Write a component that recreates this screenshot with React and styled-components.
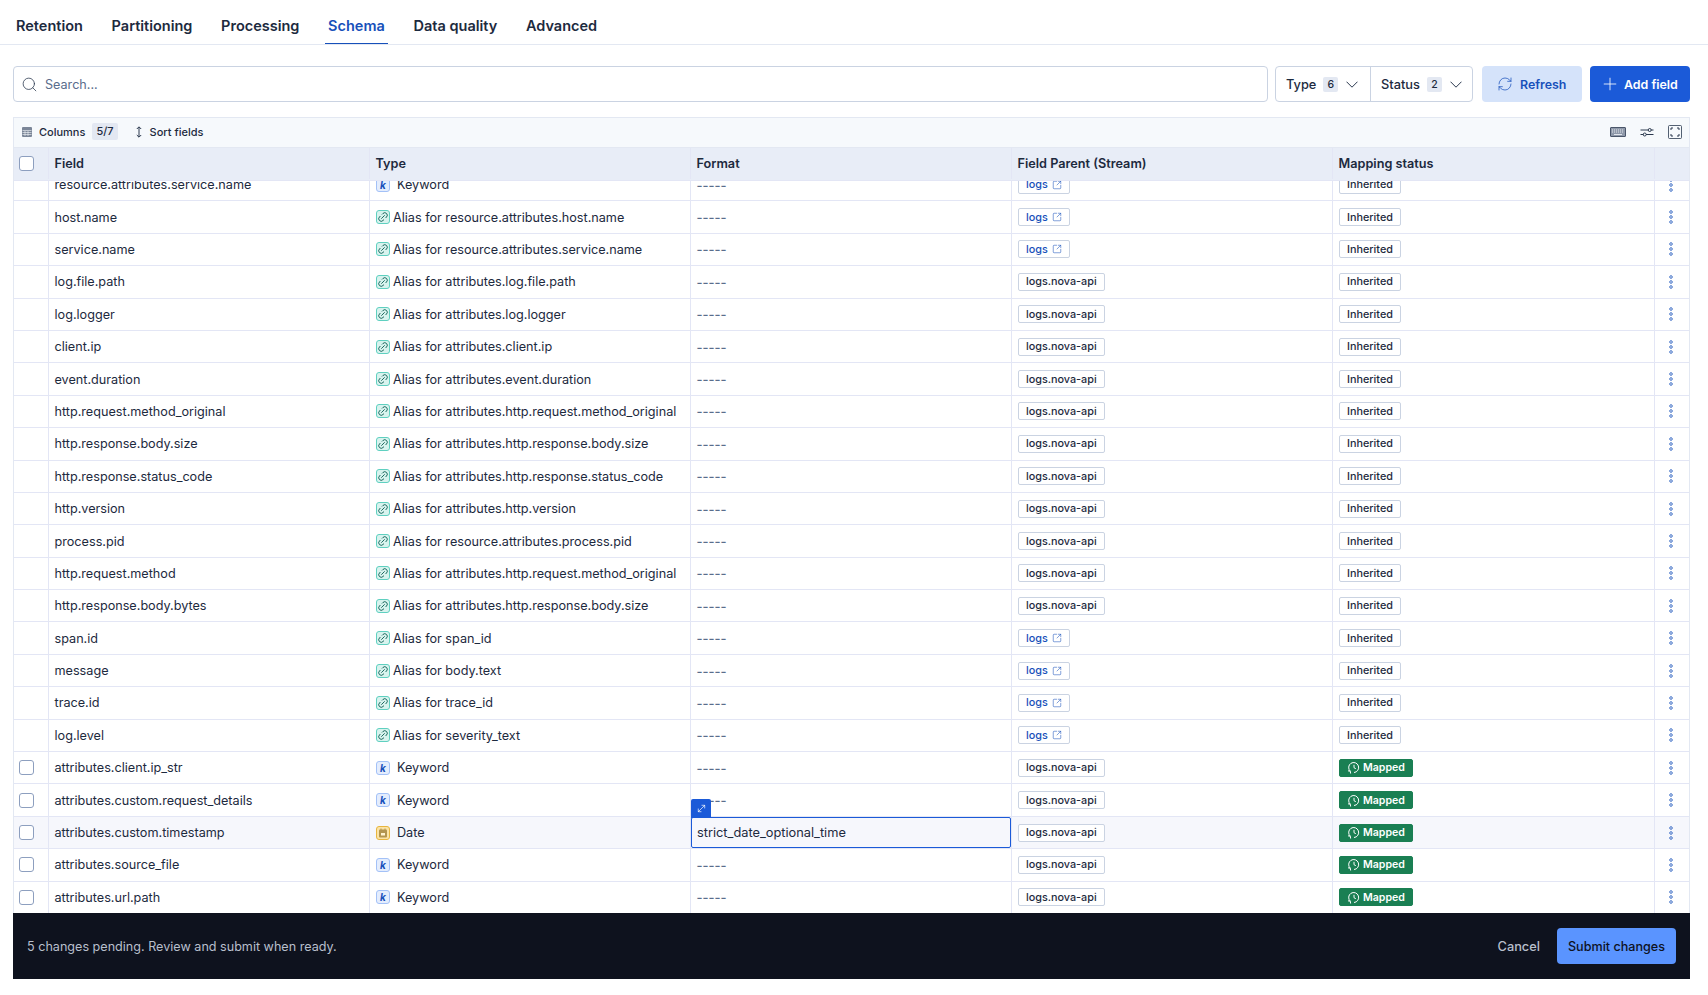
import React from 'react';
import styled, { createGlobalStyle } from 'styled-components';
import { Search, Plus, RefreshCw, Link2, SquareArrowOutUpRight, MoveDiagonal } from 'lucide-react';

const GlobalStyle = createGlobalStyle`
  html, body {
    margin: 0;
    height: 100%;
    background: #fff;
    overflow: hidden;
  }
  body {
    font-family: Inter, "Noto Sans", sans-serif;
    color: #1d2a3e;
  }
`;

const TABS = ['Retention', 'Partitioning', 'Processing', 'Schema', 'Data quality', 'Advanced'];

const COLUMNS = ['Field', 'Type', 'Format', 'Field Parent (Stream)', 'Mapping status'];

const alias = (field, target, parent) => ({ field, kind: 'alias', type: `Alias for ${target}`, parent, status: 'Inherited' });
const mapped = (field, kind, type, extra = {}) => ({ field, kind, type, parent: 'logs.nova-api', status: 'Mapped', check: true, ...extra });

const NOVA = 'logs.nova-api';

const ROWS = [
  { field: 'resource.attributes.service.name', kind: 'keyword', type: 'Keyword', parent: 'logs', status: 'Inherited' },
  alias('host.name', 'resource.attributes.host.name', 'logs'),
  alias('service.name', 'resource.attributes.service.name', 'logs'),
  alias('log.file.path', 'attributes.log.file.path', NOVA),
  alias('log.logger', 'attributes.log.logger', NOVA),
  alias('client.ip', 'attributes.client.ip', NOVA),
  alias('event.duration', 'attributes.event.duration', NOVA),
  alias('http.request.method_original', 'attributes.http.request.method_original', NOVA),
  alias('http.response.body.size', 'attributes.http.response.body.size', NOVA),
  alias('http.response.status_code', 'attributes.http.response.status_code', NOVA),
  alias('http.version', 'attributes.http.version', NOVA),
  alias('process.pid', 'resource.attributes.process.pid', NOVA),
  alias('http.request.method', 'attributes.http.request.method_original', NOVA),
  alias('http.response.body.bytes', 'attributes.http.response.body.size', NOVA),
  alias('span.id', 'span_id', 'logs'),
  alias('message', 'body.text', 'logs'),
  alias('trace.id', 'trace_id', 'logs'),
  alias('log.level', 'severity_text', 'logs'),
  mapped('attributes.client.ip_str', 'keyword', 'Keyword'),
  mapped('attributes.custom.request_details', 'keyword', 'Keyword'),
  mapped('attributes.custom.timestamp', 'date', 'Date', { format: 'strict_date_optional_time', editing: true }),
  mapped('attributes.source_file', 'keyword', 'Keyword'),
  mapped('attributes.url.path', 'keyword', 'Keyword'),
];

const Page = styled.div`
  width: 1708px;
  height: 995px;
  overflow: hidden;
  display: flex;
  flex-direction: column;
`;

const TabBar = styled.nav`
  height: 44px;
  border-bottom: 1px solid #e3e8f2;
  padding-left: 13px;
  display: flex;
  gap: 22.7px;
  flex-shrink: 0;
`;

const Tab = styled.div`
  padding: 6px 3px 0;
  display: flex;
  align-items: center;
  font-size: 14.5px;
  font-weight: 600;
  color: ${p => (p.$active ? '#1750ba' : '#1d2a3e')};
  box-shadow: ${p => (p.$active ? 'inset 0 -1px 0 #1750ba' : 'none')};
`;

const Content = styled.div`
  padding: 21px 18px 0 13px;
  display: flex;
  flex-direction: column;
`;

const Controls = styled.div`
  display: flex;
  height: 36px;
  align-items: stretch;
`;

const SearchBox = styled.div`
  width: 1255px;
  border: 1px solid #cad3e2;
  border-radius: 4px;
  display: flex;
  align-items: center;
  gap: 7px;
  padding-left: 7px;
  font-size: 12.6px;
  color: #5a6d8c;
  margin-right: 7px;
  box-sizing: border-box;
  svg { color: #2b394f; }
`;

const FilterGroup = styled.div`
  width: 198px;
  border: 1px solid #cad3e2;
  border-radius: 4px;
  display: flex;
  box-sizing: border-box;
  margin-right: 9px;
`;

const Filter = styled.div`
  display: flex;
  align-items: center;
  padding-left: 10px;
  font-size: 12.8px;
  font-weight: 500;
  width: ${p => p.$width}px;
  box-sizing: border-box;
  & + & { border-left: 1px solid #cad3e2; }
`;

const FilterCount = styled.span`
  background: #e3e8f2;
  border-radius: 2px;
  font-size: 10.5px;
  font-weight: 500;
  width: 15px;
  height: 15px;
  display: inline-flex;
  align-items: center;
  justify-content: center;
  margin: 0 8px 0 7px;
`;

const Button = styled.div`
  display: flex;
  align-items: center;
  gap: ${p => p.$gap}px;
  padding-left: ${p => p.$pad}px;
  box-sizing: border-box;
  width: 100px;
  border-radius: 4px;
  font-size: 12.4px;
  font-weight: 600;
  background: ${p => (p.$fill ? '#1b5ad8' : '#d5e3fa')};
  color: ${p => (p.$fill ? '#fff' : '#1750ba')};
`;

const RefreshButton = styled(Button)`
  margin-right: 8px;
`;

const Panel = styled.div`
  margin-top: 15px;
  border: 1px solid #e3e8f2;
  border-bottom: none;
  display: flex;
  flex-direction: column;
`;

const Toolbar = styled.div`
  height: 30px;
  box-sizing: border-box;
  background: #f6f9fc;
  border-bottom: 1px solid #e3e8f2;
  display: flex;
  align-items: center;
  font-size: 11px;
  font-weight: 500;
  padding: 0 7px 2px;
`;

const ToolbarItem = styled.div`
  display: flex;
  align-items: center;
  gap: 6px;
  margin-right: 16px;
`;

const ToolCount = styled.span`
  background: #e3e8f2;
  border-radius: 2px;
  padding: 0 4px;
  height: 17px;
  line-height: 17px;
  margin-left: 1px;
`;

const ToolIcons = styled.div`
  margin-left: auto;
  display: flex;
  align-items: center;
  gap: 14px;
`;

const RowGrid = styled.div`
  display: grid;
  grid-template-columns: 35px 321px 321px 321px 321px 322px 34px;
  flex-shrink: 0;
  box-sizing: border-box;
`;

const HeaderRow = styled(RowGrid)`
  height: 33px;
  padding-bottom: 1px;
  background: #e8edf7;
  border-bottom: 1px solid #e3e6f5;
  font-size: 12.7px;
  font-weight: 600;
`;

const Row = styled(RowGrid)`
  height: 32.4px;
  border-bottom: 1px solid #e3e6f5;
  background: ${p => (p.$active ? '#f6f7fc' : '#fff')};
  font-size: 12.65px;
`;

const Cell = styled.div`
  position: relative;
  display: flex;
  align-items: center;
  gap: ${p => p.$gap || 0}px;
  padding-left: ${p => (p.$pad === undefined ? 5.5 : p.$pad)}px;
  border-right: 1px solid #e3e6f5;
  min-width: 0;
  white-space: nowrap;
  &:last-child { border-right: none; }
`;

const CheckCell = styled(Cell)`
  padding-left: 5px;
`;

const Checkbox = styled.span`
  width: 15px;
  height: 15px;
  box-sizing: border-box;
  border: 1px solid #8d9fbf;
  border-radius: 3px;
  background: #fff;
`;

const Body = styled.div`
  height: 733px;
  overflow: hidden;
  display: flex;
  flex-direction: column;
  justify-content: flex-end;
`;

const TOKEN = {
  keyword: { bg: '#e4edfd', border: '#a3c1f7', color: '#1750ba' },
  alias: { bg: '#d8f3ee', border: '#5fd0c0', color: '#0a5a50' },
  date: { bg: '#fbe3a6', border: '#e8b53e', color: '#8a6a1e' },
};

const Token = styled.span`
  width: 14px;
  height: 14px;
  box-sizing: border-box;
  border-radius: 3px;
  border: 1px solid ${p => TOKEN[p.$kind].border};
  background: ${p => TOKEN[p.$kind].bg};
  color: ${p => TOKEN[p.$kind].color};
  display: inline-flex;
  align-items: center;
  justify-content: center;
  flex-shrink: 0;
  font-size: 10px;
  font-style: italic;
  font-weight: 700;
  line-height: 1;
`;

const Dashes = styled.span`
  color: #5a6d8c;
  font-size: 13px;
  font-weight: 500;
`;

const Badge = styled.span`
  height: 18px;
  box-sizing: border-box;
  display: inline-flex;
  align-items: center;
  gap: 4px;
  padding: 0 7px;
  border: 1px solid #cad3e2;
  border-radius: 2px;
  font-size: 10.8px;
  font-weight: 500;
  background: #fff;
`;

const LogsBadge = styled(Badge)`
  color: #1750ba;
`;

const MappedBadge = styled(Badge)`
  background: #1a7f53;
  border-color: #1a7f53;
  color: #fff;
  font-weight: 600;
  font-size: 10.6px;
  gap: 3px;
`;

const EditCell = styled.div`
  position: absolute;
  left: 0;
  top: 0;
  right: 0;
  bottom: 0;
  box-sizing: border-box;
  border: 1px solid #1b5ad8;
  border-radius: 2px;
  display: flex;
  align-items: center;
  padding-left: 5px;
  font-size: 12.8px;
`;

const ExpandButton = styled.div`
  position: absolute;
  left: -1px;
  top: -19px;
  width: 20px;
  height: 19px;
  background: #1b5ad8;
  color: #fff;
  border-radius: 2px 2px 0 0;
  display: flex;
  align-items: center;
  justify-content: center;
`;

const Kebab = styled.svg`
  margin-left: 13px;
  display: block;
`;

const ActionBar = styled.div`
  height: 66px;
  margin: -1px -1px 0;
  background: #0e121e;
  display: flex;
  align-items: center;
  padding: 0 14px;
  font-size: 12.6px;
  color: #b8bfcc;
`;

const Cancel = styled.span`
  margin-left: auto;
  font-weight: 500;
  font-size: 12.8px;
  margin-right: 17px;
`;

const Submit = styled.span`
  width: 119px;
  height: 36px;
  background: #5a94ff;
  color: #0e121e;
  border-radius: 4px;
  font-weight: 500;
  display: flex;
  align-items: center;
  justify-content: center;
`;

const TableIcon = () => (
  <svg width="12" height="12" viewBox="0 0 12 12">
    <rect x="1" y="1" width="10" height="10" rx="1" fill="#7b8698" />
    <path d="M1.500 4.500h9M1.500 6.500h9M1.500 8.500h9M4 5v5M7 5v5" stroke="#f6f9fc" strokeWidth="0.6" />
  </svg>
);

const SortIcon = () => (
  <svg width="10" height="14" viewBox="0 0 10 14" fill="none" stroke="#2b394f" strokeWidth="1">
    <path d="M5 2v10M2.800 4 5 1.800 7.200 4M2.800 10 5 12.200 7.200 10" />
  </svg>
);

const ChevronIcon = () => (
  <svg width="12" height="7" viewBox="0 0 12 7" fill="none" stroke="#2b394f" strokeWidth="1">
    <path d="M0.500 0.700 6 6.200 11.500 0.700" />
  </svg>
);

const KeyboardIcon = () => (
  <svg width="16" height="12" viewBox="0 0 16 12" fill="none">
    <rect x="0.500" y="1.500" width="15" height="9" rx="0.500" fill="#8f99aa" stroke="#4a566a" />
    <path d="M2 4h12M2 6h12" stroke="#f6f9fc" strokeWidth="0.8" strokeDasharray="1 1" />
    <path d="M4 8.500h8" stroke="#f6f9fc" strokeWidth="0.8" />
  </svg>
);

const SlidersIcon = () => (
  <svg width="14" height="12" viewBox="0 0 14 12" fill="none" stroke="#2b394f">
    <path d="M0.500 4h8M11 4h2.500M0.500 8.500h3M6 8.500h7.500" />
    <circle cx="9.700" cy="4" r="1.500" />
    <circle cx="4.700" cy="8.500" r="1.500" />
  </svg>
);

const FullscreenIcon = () => (
  <svg width="14" height="14" viewBox="0 0 14 14" fill="none" stroke="#2b394f">
    <rect x="0.500" y="0.500" width="13" height="13" rx="1" strokeOpacity="0.8" />
    <path d="M3 5V3h2M9 3h2v2M11 9v2H9M5 11H3V9" />
  </svg>
);

const CalendarIcon = () => (
  <svg width="10" height="10" viewBox="0 0 10 10">
    <rect x="1" y="1.500" width="8" height="8" rx="1" fill="#b39550" />
    <rect x="2.500" y="0.500" width="1" height="2" fill="#b39550" />
    <rect x="6.500" y="0.500" width="1" height="2" fill="#b39550" />
    <rect x="3" y="5" width="4" height="2.500" fill="#fff3d0" />
  </svg>
);

const ClockBackIcon = () => (
  <svg width="13" height="13" viewBox="0 0 13 13" fill="none" stroke="#fff" strokeWidth="1">
    <path d="M3.300 10.200A5 5 0 1 1 7 11.500" />
    <path d="M1 9.800l2.300 0.400 0.300 2.300" />
    <path d="M7 3.800v2.900l1.800 1" />
  </svg>
);

const KebabIcon = () => (
  <Kebab width="6" height="14" viewBox="0 0 6 14" fill="none" stroke="#1750ba" strokeWidth="0.8">
    <circle cx="3" cy="2" r="1.300" />
    <circle cx="3" cy="7" r="1.300" />
    <circle cx="3" cy="12" r="1.300" />
  </Kebab>
);

const TypeToken = ({ kind }) => (
  <Token $kind={kind}>
    {kind === 'keyword' && 'k'}
    {kind === 'alias' && <Link2 size={12} strokeWidth={1.7} style={{ transform: 'rotate(-45deg)' }} />}
    {kind === 'date' && <CalendarIcon />}
  </Token>
);

const SchemaRow = ({ row }) => (
  <Row $active={row.editing}>
    <CheckCell $pad={5}>{row.check && <Checkbox />}</CheckCell>
    <Cell>{row.field}</Cell>
    <Cell $pad={6} $gap={row.kind === 'alias' ? 3 : 7}>
      <TypeToken kind={row.kind} />
      {row.type}
    </Cell>
    <Cell>
      {row.editing ? (
        <EditCell>
          <ExpandButton><MoveDiagonal size={11} strokeWidth={1.5} /></ExpandButton>
          {row.format}
        </EditCell>
      ) : (
        <Dashes>-----</Dashes>
      )}
    </Cell>
    <Cell $pad={6}>
      {row.parent === 'logs' ? (
        <LogsBadge>logs <SquareArrowOutUpRight size={10} strokeWidth={1.3} /></LogsBadge>
      ) : (
        <Badge>{row.parent}</Badge>
      )}
    </Cell>
    <Cell $pad={6}>
      {row.status === 'Mapped' ? (
        <MappedBadge><ClockBackIcon />Mapped</MappedBadge>
      ) : (
        <Badge>{row.status}</Badge>
      )}
    </Cell>
    <Cell $pad={0}><KebabIcon /></Cell>
  </Row>
);

const App = () => (
  <Page>
    <GlobalStyle />
    <TabBar>
      {TABS.map(tab => <Tab key={tab} $active={tab === 'Schema'}>{tab}</Tab>)}
    </TabBar>
    <Content>
      <Controls>
        <SearchBox><Search size={17} strokeWidth={1.1} />Search...</SearchBox>
        <FilterGroup>
          <Filter $width={94}>Type<FilterCount>6</FilterCount><ChevronIcon /></Filter>
          <Filter $width={102}>Status<FilterCount>2</FilterCount><ChevronIcon /></Filter>
        </FilterGroup>
        <RefreshButton $pad={15} $gap={7}><RefreshCw size={16} strokeWidth={1.1} />Refresh</RefreshButton>
        <Button $fill $pad={10} $gap={4}><Plus size={20} strokeWidth={1} />Add field</Button>
      </Controls>
      <Panel>
        <Toolbar>
          <ToolbarItem><TableIcon />Columns<ToolCount>5/7</ToolCount></ToolbarItem>
          <ToolbarItem><SortIcon />Sort fields</ToolbarItem>
          <ToolIcons><KeyboardIcon /><SlidersIcon /><FullscreenIcon /></ToolIcons>
        </Toolbar>
        <HeaderRow>
          <CheckCell><Checkbox /></CheckCell>
          {COLUMNS.map(col => <Cell key={col}>{col}</Cell>)}
          <Cell />
        </HeaderRow>
        <Body>
          {ROWS.map(row => <SchemaRow key={row.field} row={row} />)}
        </Body>
        <ActionBar>
          5 changes pending. Review and submit when ready.
          <Cancel>Cancel</Cancel>
          <Submit>Submit changes</Submit>
        </ActionBar>
      </Panel>
    </Content>
  </Page>
);

export default App;
